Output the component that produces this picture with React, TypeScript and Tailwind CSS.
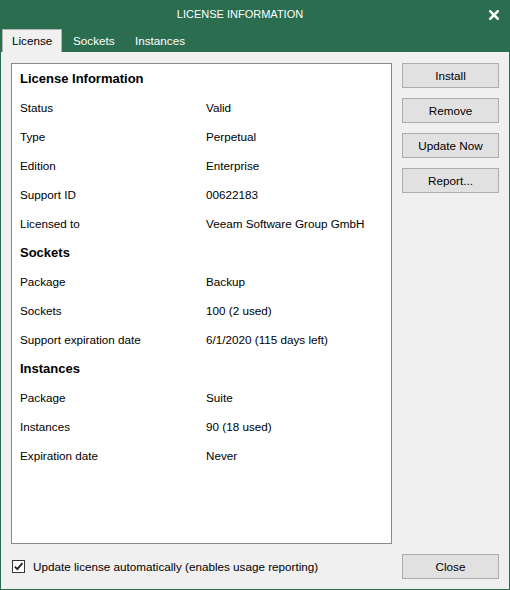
import React from "react";

const font = { fontFamily: '"Liberation Sans", Arial, sans-serif' };

type Row = { label: string; value?: string; header?: boolean };

const rows: Row[] = [
  { label: "License Information", header: true },
  { label: "Status", value: "Valid" },
  { label: "Type", value: "Perpetual" },
  { label: "Edition", value: "Enterprise" },
  { label: "Support ID", value: "00622183" },
  { label: "Licensed to", value: "Veeam Software Group GmbH" },
  { label: "Sockets", header: true },
  { label: "Package", value: "Backup" },
  { label: "Sockets", value: "100 (2 used)" },
  { label: "Support expiration date", value: "6/1/2020 (115 days left)" },
  { label: "Instances", header: true },
  { label: "Package", value: "Suite" },
  { label: "Instances", value: "90 (18 used)" },
  { label: "Expiration date", value: "Never" },
];

function Btn({ children }: { children: React.ReactNode }) {
  return (
    <button className="h-[25px] w-[97px] bg-[#e1e1e1] border border-[#adadad] text-[11.7px] text-black flex items-center justify-center">
      {children}
    </button>
  );
}

export default function App() {
  return (
    <div
      className="w-[510px] h-[590px] bg-[#2b6d4f] flex flex-col overflow-hidden"
      style={font}
    >
      {/* title bar */}
      <div className="h-[29px] flex items-center relative">
        <div className="w-[480px] text-center text-white text-[11px]">
          LICENSE INFORMATION
        </div>
        <svg
          className="absolute left-[489px] top-[10px]"
          width="10"
          height="10"
          viewBox="0 0 10 10"
        >
          <path
            d="M1.3 1.3 L8.7 8.7 M8.7 1.3 L1.3 8.7"
            stroke="white"
            strokeWidth="2.6"
            strokeLinecap="square"
          />
        </svg>
      </div>

      {/* tabs */}
      <div className="h-[23px] flex items-end pl-[2px] text-[11.7px]">
        <div className="h-[23px] w-[60px] bg-[#f0f0f0] border border-b-0 border-[#b4b4b4] pl-[9px] flex items-center text-black">
          License
        </div>
        <div className="h-[23px] w-[62px] pl-[11px] flex items-center text-white">
          Sockets
        </div>
        <div className="h-[23px] pl-[11px] flex items-center text-white">
          Instances
        </div>
      </div>

      {/* body */}
      <div className="flex-1 mx-[1px] mb-[1px] bg-[#f0f0f0] flex flex-col px-[10px] pt-[11px] pb-[10px]">
        <div className="flex gap-[10px] h-[481px]">
          <div className="flex-1 bg-white border border-[#898989] pl-[8px]">
            {rows.map((r, i) =>
              r.header ? (
                <div
                  key={i}
                  className="h-[29px] flex items-center text-[13px] font-bold text-black"
                >
                  {r.label}
                </div>
              ) : (
                <div
                  key={i}
                  className="h-[29px] flex items-center text-[11.7px] text-black"
                >
                  <div className="w-[186px]">{r.label}</div>
                  <div>{r.value}</div>
                </div>
              )
            )}
          </div>
          <div className="w-[97px] flex flex-col gap-[10px]">
            <Btn>Install</Btn>
            <Btn>Remove</Btn>
            <Btn>Update Now</Btn>
            <Btn>Report...</Btn>
          </div>
        </div>

        <div className="mt-[10px] h-[25px] flex items-center justify-between">
          <label className="flex items-center gap-[8px] text-[11.7px] text-black pl-[1px]">
            <span className="w-[13px] h-[13px] border border-[#333] bg-white flex items-center justify-center">
              <svg width="11" height="11" viewBox="0 0 11 11">
                <path
                  d="M1.8 5.6 L4.3 8.2 L9.4 2.2"
                  fill="none"
                  stroke="#222"
                  strokeWidth="1.8"
                />
              </svg>
            </span>
            Update license automatically (enables usage reporting)
          </label>
          <Btn>Close</Btn>
        </div>
      </div>
    </div>
  );
}
